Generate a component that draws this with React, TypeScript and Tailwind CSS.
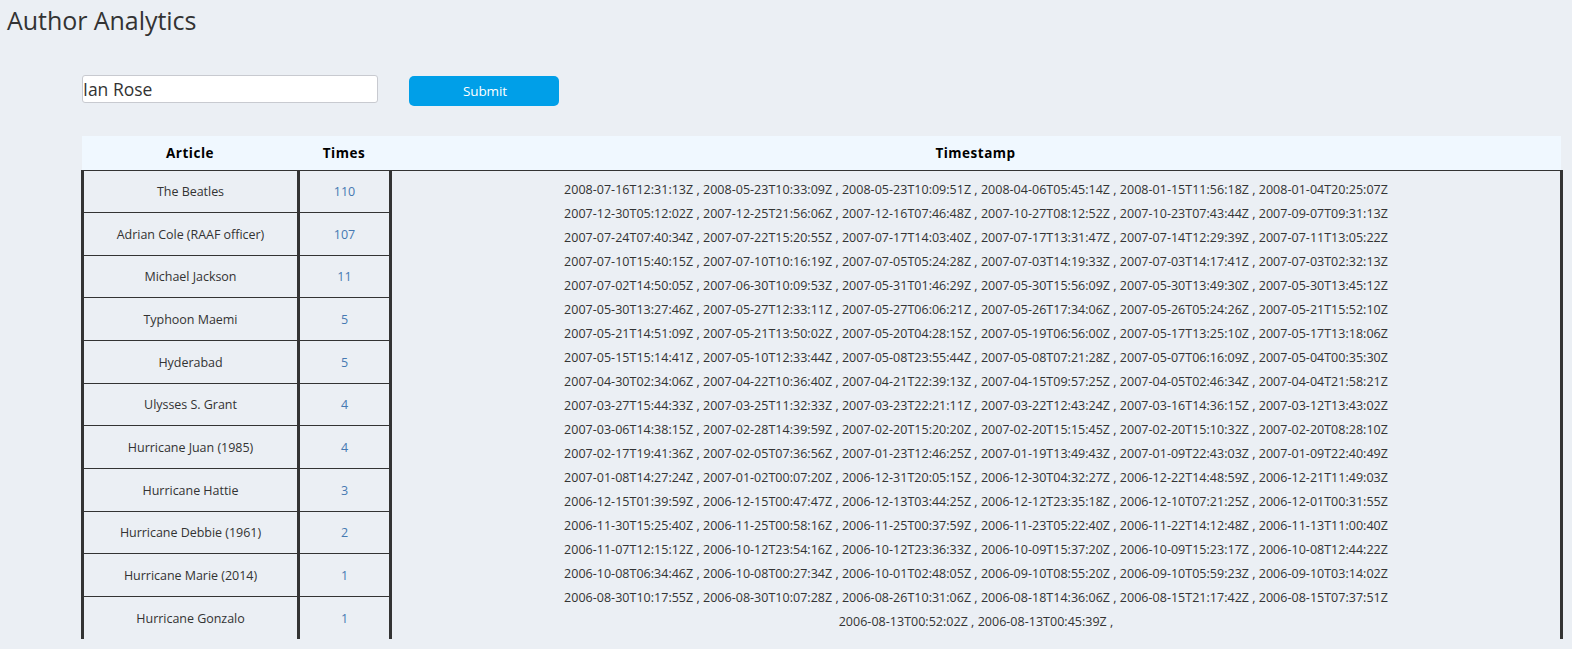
const rows: [string, number][] = [
  ["The Beatles", 110],
  ["Adrian Cole (RAAF officer)", 107],
  ["Michael Jackson", 11],
  ["Typhoon Maemi", 5],
  ["Hyderabad", 5],
  ["Ulysses S. Grant", 4],
  ["Hurricane Juan (1985)", 4],
  ["Hurricane Hattie", 3],
  ["Hurricane Debbie (1961)", 2],
  ["Hurricane Marie (2014)", 1],
  ["Hurricane Gonzalo", 1],
];

const stamps: string[] = [
  "2008-07-16T12:31:13Z , 2008-05-23T10:33:09Z , 2008-05-23T10:09:51Z , 2008-04-06T05:45:14Z , 2008-01-15T11:56:18Z , 2008-01-04T20:25:07Z",
  "2007-12-30T05:12:02Z , 2007-12-25T21:56:06Z , 2007-12-16T07:46:48Z , 2007-10-27T08:12:52Z , 2007-10-23T07:43:44Z , 2007-09-07T09:31:13Z",
  "2007-07-24T07:40:34Z , 2007-07-22T15:20:55Z , 2007-07-17T14:03:40Z , 2007-07-17T13:31:47Z , 2007-07-14T12:29:39Z , 2007-07-11T13:05:22Z",
  "2007-07-10T15:40:15Z , 2007-07-10T10:16:19Z , 2007-07-05T05:24:28Z , 2007-07-03T14:19:33Z , 2007-07-03T14:17:41Z , 2007-07-03T02:32:13Z",
  "2007-07-02T14:50:05Z , 2007-06-30T10:09:53Z , 2007-05-31T01:46:29Z , 2007-05-30T15:56:09Z , 2007-05-30T13:49:30Z , 2007-05-30T13:45:12Z",
  "2007-05-30T13:27:46Z , 2007-05-27T12:33:11Z , 2007-05-27T06:06:21Z , 2007-05-26T17:34:06Z , 2007-05-26T05:24:26Z , 2007-05-21T15:52:10Z",
  "2007-05-21T14:51:09Z , 2007-05-21T13:50:02Z , 2007-05-20T04:28:15Z , 2007-05-19T06:56:00Z , 2007-05-17T13:25:10Z , 2007-05-17T13:18:06Z",
  "2007-05-15T15:14:41Z , 2007-05-10T12:33:44Z , 2007-05-08T23:55:44Z , 2007-05-08T07:21:28Z , 2007-05-07T06:16:09Z , 2007-05-04T00:35:30Z",
  "2007-04-30T02:34:06Z , 2007-04-22T10:36:40Z , 2007-04-21T22:39:13Z , 2007-04-15T09:57:25Z , 2007-04-05T02:46:34Z , 2007-04-04T21:58:21Z",
  "2007-03-27T15:44:33Z , 2007-03-25T11:32:33Z , 2007-03-23T22:21:11Z , 2007-03-22T12:43:24Z , 2007-03-16T14:36:15Z , 2007-03-12T13:43:02Z",
  "2007-03-06T14:38:15Z , 2007-02-28T14:39:59Z , 2007-02-20T15:20:20Z , 2007-02-20T15:15:45Z , 2007-02-20T15:10:32Z , 2007-02-20T08:28:10Z",
  "2007-02-17T19:41:36Z , 2007-02-05T07:36:56Z , 2007-01-23T12:46:25Z , 2007-01-19T13:49:43Z , 2007-01-09T22:43:03Z , 2007-01-09T22:40:49Z",
  "2007-01-08T14:27:24Z , 2007-01-02T00:07:20Z , 2006-12-31T20:05:15Z , 2006-12-30T04:32:27Z , 2006-12-22T14:48:59Z , 2006-12-21T11:49:03Z",
  "2006-12-15T01:39:59Z , 2006-12-15T00:47:47Z , 2006-12-13T03:44:25Z , 2006-12-12T23:35:18Z , 2006-12-10T07:21:25Z , 2006-12-01T00:31:55Z",
  "2006-11-30T15:25:40Z , 2006-11-25T00:58:16Z , 2006-11-25T00:37:59Z , 2006-11-23T05:22:40Z , 2006-11-22T14:12:48Z , 2006-11-13T11:00:40Z",
  "2006-11-07T12:15:12Z , 2006-10-12T23:54:16Z , 2006-10-12T23:36:33Z , 2006-10-09T15:37:20Z , 2006-10-09T15:23:17Z , 2006-10-08T12:44:22Z",
  "2006-10-08T06:34:46Z , 2006-10-08T00:27:34Z , 2006-10-01T02:48:05Z , 2006-09-10T08:55:20Z , 2006-09-10T05:59:23Z , 2006-09-10T03:14:02Z",
  "2006-08-30T10:17:55Z , 2006-08-30T10:07:28Z , 2006-08-26T10:31:06Z , 2006-08-18T14:36:06Z , 2006-08-15T21:17:42Z , 2006-08-15T07:37:51Z",
  "2006-08-13T00:52:02Z , 2006-08-13T00:45:39Z ,",
];

const rowGrid = "grid grid-rows-[42px_43px_42px_43px_43px_42px_43px_43px_42px_43px_43px]";

export default function App() {
  return (
    <div className="h-[649px] w-[1572px] overflow-hidden bg-[#ebeff4] font-['Open_Sans','Noto_Sans',sans-serif] text-[#333]">
      <h1 className="h-[75px] pt-[3px] pl-[7px] text-[25px] leading-[34px] tracking-[-0.05px]">Author Analytics</h1>

      <form className="flex pl-[82px]" onSubmit={(e) => e.preventDefault()}>
        <input
          className="h-7 w-[296px] rounded-[3px] border border-[#c8cad0] bg-white text-[17.5px] leading-6 outline-none"
          defaultValue="Ian Rose"
        />
        <button className="mt-px ml-[31px] h-[30px] w-[150px] rounded-[5px] bg-[#009fe8] pl-[2px] text-[13.5px] tracking-[-0.1px] text-white">Submit</button>
      </form>

      <section className="mt-[30px] ml-[81px] w-[1482px]">
        <header className="mr-[2px] ml-px grid h-[34px] grid-cols-[216px_92px_1fr] items-center bg-[#f0f8ff] text-center text-[13.5px] font-bold tracking-[0.5px] text-black">
          <span>Article</span>
          <span>Times</span>
          <span>Timestamp</span>
        </header>
        <div className="flex h-[469px] border-r-[3px] border-[#333]">
          <div className={`${rowGrid} w-[216px] border-l-[3px] border-[#333] text-center text-[12.5px] tracking-[-0.03px]`}>
            {rows.map(([name]) => (
              <div key={name} className="flex items-center justify-center border-t border-[#333] pt-[2px]">{name}</div>
            ))}
          </div>
          <div className={`${rowGrid} w-[92px] border-l-[3px] border-[#333] text-center text-[12.5px] text-[#4679b2]`}>
            {rows.map(([name, times]) => (
              <a key={name} className="flex items-center justify-center border-t border-[#333] pt-[2px]">{times}</a>
            ))}
          </div>
          <div className="flex-1 border-t border-l-[3px] border-[#333] pt-[7px] text-center text-[12.5px] leading-6 tracking-[0.022px] whitespace-pre">
            {stamps.map((line) => (
              <p key={line}>{line}</p>
            ))}
          </div>
        </div>
      </section>
    </div>
  );
}
